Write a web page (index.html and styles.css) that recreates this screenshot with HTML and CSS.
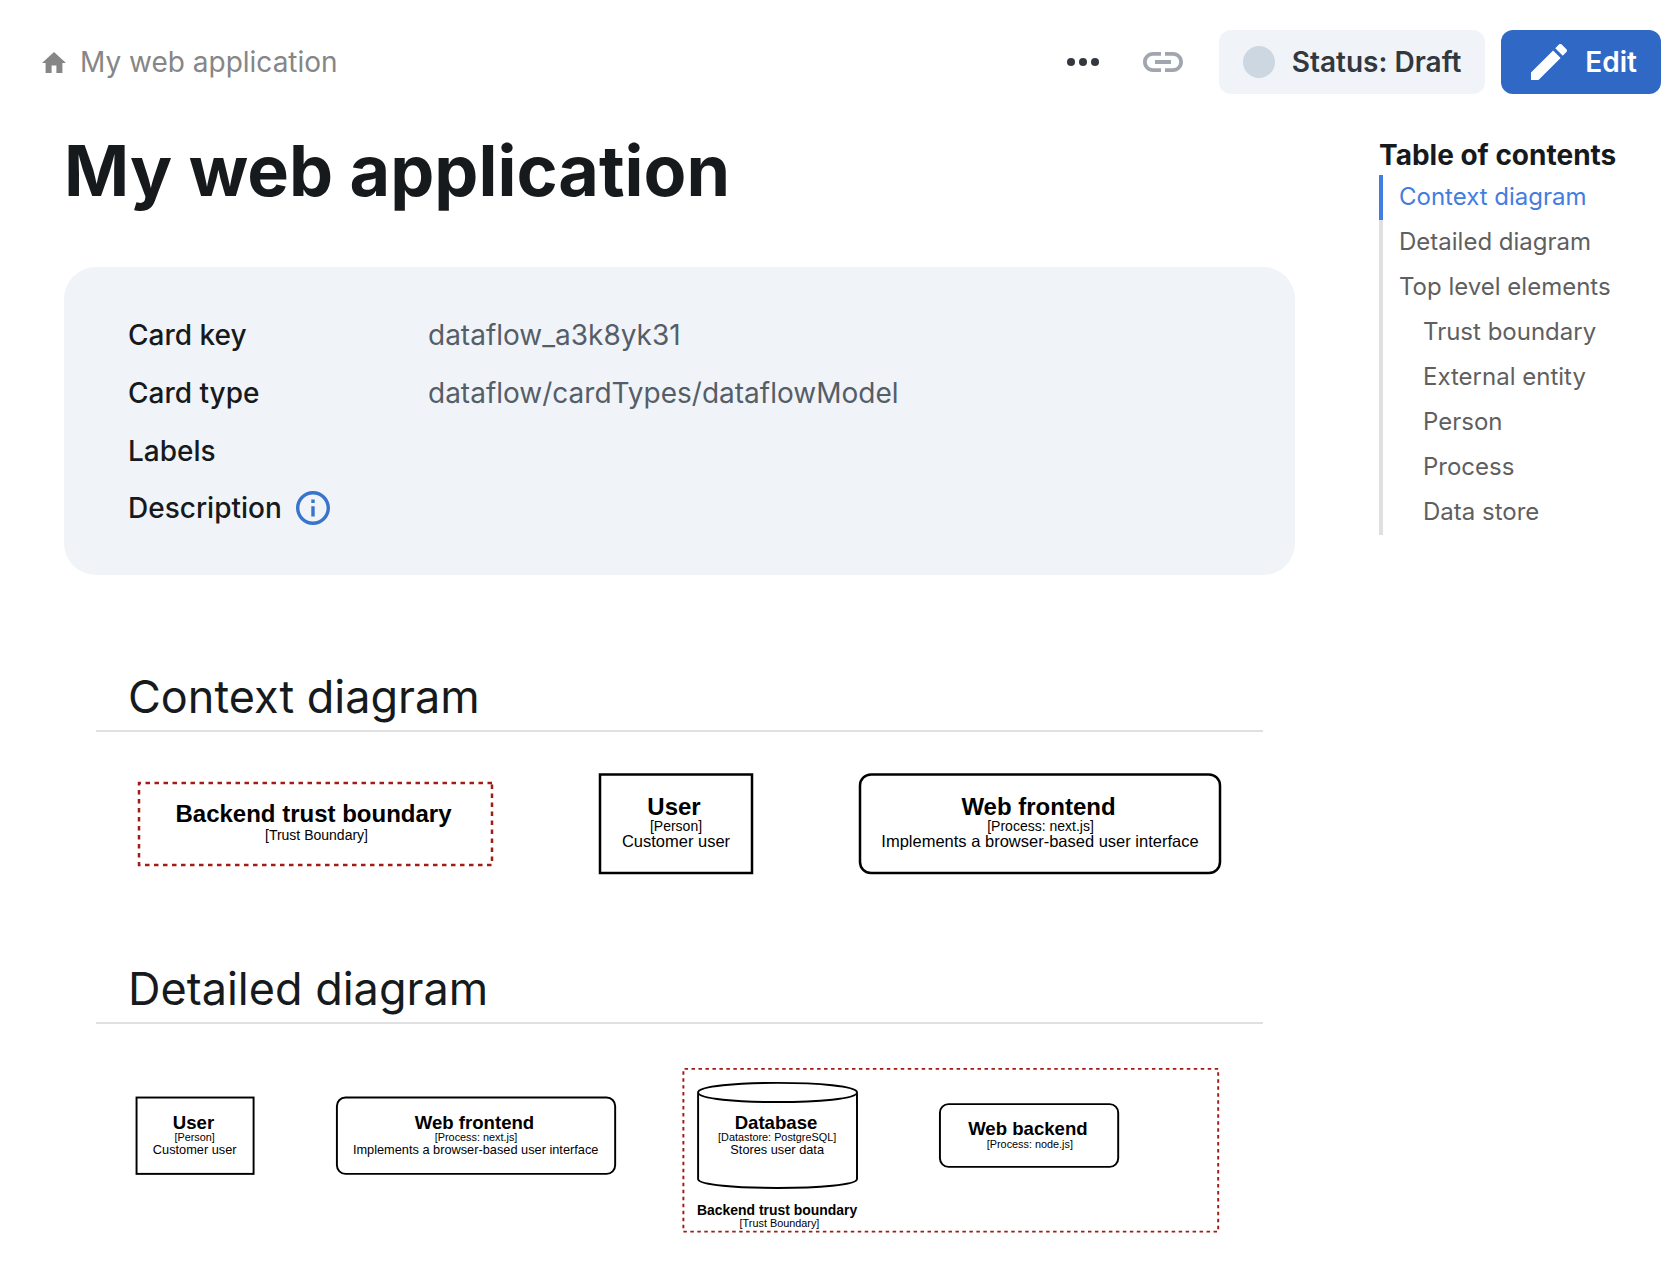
FILE: index.html
```html
<!DOCTYPE html>
<html lang="en">
<head>
<meta charset="utf-8">
<meta name="viewport" content="width=device-width, initial-scale=1">
<title>My web application</title>
<link rel="stylesheet" href="styles.css">
</head>
<body>
<header class="toolbar">
  <nav class="breadcrumb" aria-label="Breadcrumb">
    <a class="home" href="#" aria-label="Home"><svg viewBox="2 3 20 17" width="24" height="21" preserveAspectRatio="none" aria-hidden="true"><path d="M10 20v-6h4v6h5v-8h3L12 3 2 12h3v8z"/></svg></a>
    <a href="#">My web application</a>
  </nav>
  <div class="actions">
    <button class="icon-button more" type="button" aria-label="More"><svg viewBox="0 0 32 8" width="32" height="8" aria-hidden="true"><circle cx="4" cy="4" r="4"/><circle cx="16" cy="4" r="4"/><circle cx="28" cy="4" r="4"/></svg></button>
    <button class="icon-button link" type="button" aria-label="Copy link"><svg viewBox="2 7 20 10" width="40" height="20" aria-hidden="true"><path d="M3.9 12c0-1.71 1.39-3.1 3.1-3.1h4V7H7c-2.76 0-5 2.24-5 5s2.24 5 5 5h4v-1.9H7c-1.71 0-3.1-1.39-3.1-3.1M8 13h8v-2H8zm9-6h-4v1.9h4c1.71 0 3.1 1.39 3.1 3.1s-1.39 3.1-3.1 3.1h-4V17h4c2.76 0 5-2.24 5-5s-2.24-5-5-5"/></svg></button>
    <button class="button status" type="button"><span class="dot"></span>Status: Draft</button>
    <button class="button edit" type="button"><svg viewBox="3 3 18 18" width="36" height="36" aria-hidden="true"><path d="M3 17.25V21h3.75L17.81 9.94l-3.75-3.75zM20.71 7.04c.39-.39.39-1.02 0-1.41l-2.34-2.34a.996.996 0 0 0-1.41 0l-1.83 1.83 3.75 3.75z"/></svg>Edit</button>
  </div>
</header>

<div class="layout">
  <main>
    <h1>My web application</h1>
    <dl class="card">
      <dt>Card key</dt><dd>dataflow_a3k8yk31</dd>
      <dt>Card type</dt><dd>dataflow/cardTypes/dataflowModel</dd>
      <dt>Labels</dt><dd></dd>
      <dt>Description <svg class="info" viewBox="2 2 20 20" width="34" height="34" role="img" aria-label="Information"><path d="M11 7h2v2h-2zm0 4h2v6h-2zm1-9C6.48 2 2 6.48 2 12s4.480 10 10 10 10-4.480 10-10S17.520 2 12 2m0 18c-4.410 0-8-3.590-8-8s3.590-8 8-8 8 3.590 8 8-3.590 8-8 8"/></svg></dt><dd></dd>
    </dl>

    <section id="context">
      <h2>Context diagram</h2>
      <svg class="diagram" viewBox="0 0 2206 230" role="img" aria-label="Context diagram">
        <path class="boundary" d="M728 34H22V198H728Z"/>
        <text class="name" x="371" y="112">Backend trust boundary</text>
        <text class="kind" x="377" y="147">[Trust Boundary]</text>

        <rect class="node" x="944" y="17" width="304" height="197"/>
        <text class="name" x="1092" y="98">User</text>
        <text class="kind" x="1096" y="129">[Person]</text>
        <text class="note" x="1096" y="161">Customer user</text>

        <rect class="node" x="1464" y="17" width="720" height="197" rx="22"/>
        <text class="name" x="1821" y="98">Web frontend</text>
        <text class="kind" x="1825" y="129">[Process: next.js]</text>
        <text class="note" x="1824" y="161">Implements a browser-based user interface</text>
      </svg>
    </section>

    <section id="detailed">
      <h2>Detailed diagram</h2>
      <svg class="diagram" viewBox="0 -5 2846 472" role="img" aria-label="Detailed diagram">
        <rect class="node" x="22" y="97" width="302" height="197"/>
        <text class="name" x="169" y="178">User</text>
        <text class="kind" x="172" y="210">[Person]</text>
        <text class="note" x="172" y="243">Customer user</text>

        <rect class="node" x="539" y="97" width="718" height="197" rx="22"/>
        <text class="name" x="894" y="178">Web frontend</text>
        <text class="kind" x="898" y="210">[Process: next.js]</text>
        <text class="note" x="897" y="243">Implements a browser-based user interface</text>

        <path class="boundary" d="M2813 23H1433V443H2813Z"/>
        <path class="node" d="M1471 84C1471 51 1881 51 1881 84V307C1881 338 1471 338 1471 307ZM1471 84C1471 117 1881 117 1881 84"/>
        <text class="name" x="1672" y="177">Database</text>
        <text class="kind" x="1675" y="210">[Datastore: PostgreSQL]</text>
        <text class="note" x="1675" y="243">Stores user data</text>

        <rect class="node" x="2095" y="114" width="460" height="162" rx="22"/>
        <text class="name" x="2322" y="194">Web backend</text>
        <text class="kind" x="2327" y="227">[Process: node.js]</text>

        <text class="caption" x="1675" y="400">Backend trust boundary</text>
        <text class="kind" x="1681" y="431">[Trust Boundary]</text>
      </svg>
    </section>
  </main>

  <nav class="toc" aria-labelledby="toc-title">
    <h3 id="toc-title">Table of contents</h3>
    <ul>
      <li><a class="active" href="#context">Context diagram</a></li>
      <li><a href="#detailed">Detailed diagram</a></li>
      <li><a href="#elements">Top level elements</a></li>
      <li><a class="nested" href="#boundary">Trust boundary</a></li>
      <li><a class="nested" href="#entity">External entity</a></li>
      <li><a class="nested" href="#person">Person</a></li>
      <li><a class="nested" href="#process">Process</a></li>
      <li><a class="nested" href="#store">Data store</a></li>
    </ul>
  </nav>
</div>
</body>
</html>
```
FILE: styles.css
```css
* {
  box-sizing: border-box;
}

body {
  margin: 0;
  background: #fff;
  color: #171a1c;
  font-family: Inter, "Liberation Sans", sans-serif;
  font-size: 28px;
}

h1, h2, h3, ul, dl, dd {
  margin: 0;
  padding: 0;
}

a {
  color: inherit;
  text-decoration: none;
}

svg {
  display: block;
  fill: currentColor;
}

/* Top bar */
.toolbar {
  display: flex;
  justify-content: space-between;
  align-items: center;
  padding: 30px 8px 0 42px;
}

.breadcrumb {
  display: flex;
  align-items: center;
  gap: 14px;
  color: #868686;
}

.actions {
  display: flex;
  align-items: center;
  gap: 16px;
}

.icon-button {
  display: flex;
  align-items: center;
  justify-content: center;
  width: 64px;
  height: 64px;
  padding: 0;
  border: 0;
  background: none;
}

.more {
  color: #32383e;
}

.link {
  margin-right: 8px;
  color: #a1a6ae;
}

.button {
  display: flex;
  align-items: center;
  gap: 17px;
  height: 64px;
  padding: 0 24px;
  border: 0;
  border-radius: 12px;
  font: inherit;
  font-weight: 600;
}

.status {
  background: #f0f4f8;
  color: #32383e;
}

.dot {
  width: 32px;
  height: 32px;
  border-radius: 50%;
  background: #cdd7e1;
}

.edit {
  gap: 18px;
  padding: 0 24px 0 30px;
  background: #2f69c5;
  color: #fff;
}

/* Content and table of contents */
.layout {
  display: grid;
  grid-template-columns: minmax(0, 1fr) 282px;
  gap: 84px;
  align-items: start;
  padding: 37px 8px 24px 64px;
}

h1 {
  font-size: 70px;
  font-weight: 700;
  line-height: 80px;
}

.card {
  display: grid;
  grid-template-columns: 300px 1fr;
  grid-template-rows: repeat(3, 58px) 56px;
  align-items: center;
  margin-top: 56px;
  padding: 39px 64px;
  border-radius: 32px;
  background: #f0f4f8;
}

.card dt {
  display: flex;
  align-items: center;
  gap: 14px;
  font-weight: 500;
}

.card dd {
  color: #555e68;
}

.info {
  color: #3874cb;
}

section {
  margin: 80px 32px 0;
}

.card + section {
  margin-top: 94px;
}

h2 {
  padding: 0 32px 6px;
  border-bottom: 2px solid #e0e0e0;
  font-size: 45px;
  font-weight: 400;
  line-height: 55px;
}

/* Diagrams */
.diagram {
  width: calc(100% - 64px);
  margin: 34px 32px 0;
  font-family: "Liberation Sans", Arial, sans-serif;
  text-anchor: middle;
  fill: #000;
}

.node {
  fill: none;
  stroke: #000;
  stroke-width: 5px;
}

.boundary {
  fill: none;
  stroke: #a01c16;
  stroke-width: 5px;
  stroke-dasharray: 9 9;
}

.name {
  font-size: 48px;
  font-weight: 700;
}

.caption {
  font-size: 36px;
  font-weight: 700;
}

.kind {
  font-size: 28px;
}

.note {
  font-size: 33px;
}

/* Table of contents */
.toc {
  padding-top: 7px;
}

.toc h3 {
  font-size: 28px;
  font-weight: 700;
  line-height: 34px;
  white-space: nowrap;
}

.toc ul {
  margin-top: 3px;
  list-style: none;
}

.toc a {
  display: block;
  padding: 0 0 2px 16px;
  border-left: 4px solid #e0e0e0;
  color: #5f5f5f;
  font-size: 24px;
  line-height: 43px;
}

.toc .nested {
  padding-left: 40px;
}

.toc .active {
  border-color: #437de0;
  color: #437de0;
}
```
